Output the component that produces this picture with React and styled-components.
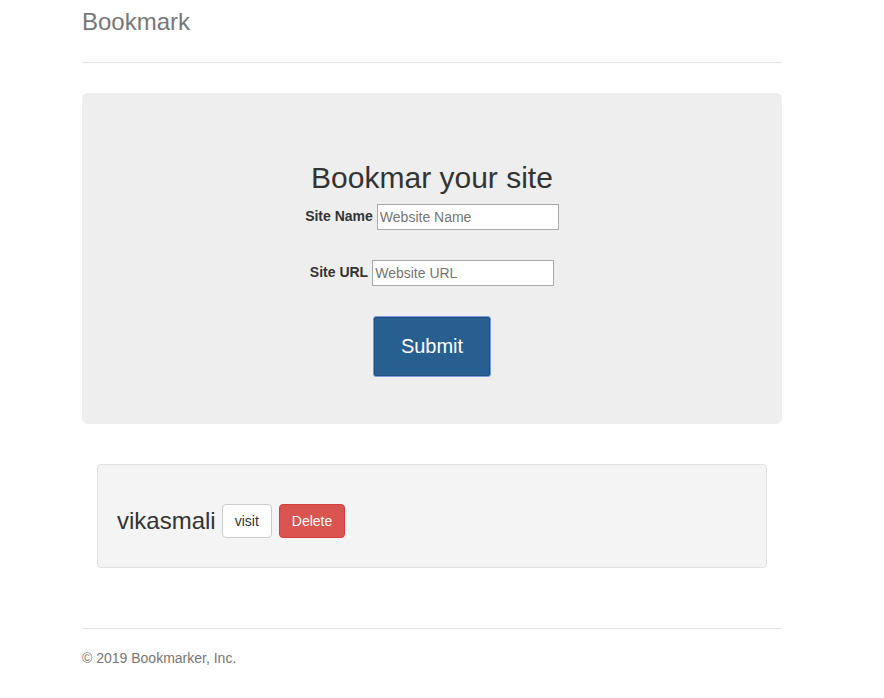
import React from "react"
import styled, { createGlobalStyle } from "styled-components"

const GlobalStyle = createGlobalStyle`
  html, body {
    margin: 0;
    padding: 0;
    background: #fff;
  }
  body {
    font-family: "Liberation Sans", Arial, Helvetica, sans-serif;
    font-size: 14px;
    line-height: 1.42857;
    color: #333;
  }
  * {
    box-sizing: border-box;
  }
`

const Container = styled.div`
  width: 700px;
  margin: 0 auto;
  padding-top: 2px;
  position: relative;
  left: -10px;
`

const Header = styled.div`
  padding-bottom: 20px;
  border-bottom: 1px solid #e5e5e5;

  h3 {
    margin: 0;
    font-size: 24px;
    font-weight: 500;
    line-height: 40px;
    color: #777;
  }
`

const Jumbotron = styled.div`
  margin-top: 30px;
  background: #eee;
  border-radius: 6px;
  padding: 48px 0 47px;
  text-align: center;

  h2 {
    margin: 20px 0 10px;
    font-size: 30px;
    font-weight: 500;
    line-height: 33px;
    color: #333;
  }
`

const FieldRow = styled.div`
  display: flex;
  justify-content: center;
  align-items: center;
  gap: 4px;
  margin-bottom: ${props => props.gap || 0}px;

  label {
    font-weight: 700;
    font-size: 14px;
    color: #333;
  }
`

const Input = styled.input`
  width: 182px;
  height: 26px;
  padding: 1px 2px;
  border: 1px solid #a9a9a9;
  font-family: "Liberation Sans", Arial, sans-serif;
  font-size: 14px;
  color: #333;
  background: #fff;
  outline: none;

  &::placeholder {
    color: #757575;
  }
`

const SubmitButton = styled.button`
  width: 118px;
  height: 61px;
  background: #265f90;
  color: #fff;
  font-family: "Liberation Sans", Arial, sans-serif;
  font-size: 20px;
  border: 1px solid #7d9be3;
  border-radius: 3px;
  box-shadow: inset 0 0 0 1px #1f4f7c;
  cursor: pointer;
`

const Well = styled.div`
  margin: 40px 15px 0;
  background: #f4f4f4;
  border: 1px solid #e0e0e0;
  border-radius: 4px;
  padding: 39px 19px 29px;
  display: flex;
  align-items: center;

  h3 {
    margin: 0 6px 0 0;
    font-size: 24px;
    font-weight: 500;
    line-height: 30px;
    color: #333;
  }
`

const Btn = styled.button`
  height: 34px;
  padding: 6px 12px;
  font-family: "Liberation Sans", Arial, sans-serif;
  font-size: 14px;
  line-height: 20px;
  border-radius: 4px;
  margin-right: 7px;
  cursor: pointer;
  background: ${props => (props.danger ? "#d9534f" : "#fff")};
  color: ${props => (props.danger ? "#fff" : "#333")};
  border: 1px solid ${props => (props.danger ? "#d43f3a" : "#ccc")};
`

const Footer = styled.footer`
  margin-top: 60px;
  padding-top: 19px;
  border-top: 1px solid #e5e5e5;
  color: #777;
  font-size: 14px;
  line-height: 20px;
`

function App() {
  return (
    <Container>
      <GlobalStyle />
      <Header>
        <h3>Bookmark</h3>
      </Header>
      <Jumbotron>
        <h2>Bookmar your site</h2>
        <FieldRow gap={30}>
          <label>Site Name</label>
          <Input type="text" placeholder="Website Name" />
        </FieldRow>
        <FieldRow gap={30}>
          <label>Site URL</label>
          <Input type="text" placeholder="Website URL" />
        </FieldRow>
        <SubmitButton>Submit</SubmitButton>
      </Jumbotron>
      <Well>
        <h3>vikasmali</h3>
        <Btn>visit</Btn>
        <Btn danger>Delete</Btn>
      </Well>
      <Footer>© 2019 Bookmarker, Inc.</Footer>
    </Container>
  )
}

export default App
